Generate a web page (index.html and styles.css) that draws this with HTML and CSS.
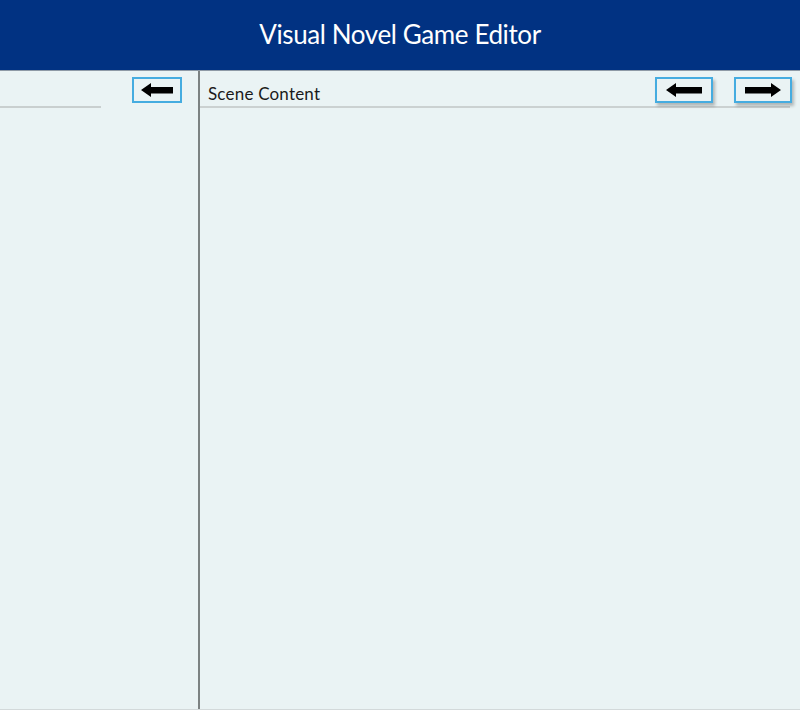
FILE: index.html
```html
<!DOCTYPE html>
<html lang="en">
<head>
<meta charset="utf-8">
<title>Visual Novel Game Editor</title>
<link rel="stylesheet" href="styles.css">
</head>
<body>
<header class="topbar">
  <h1 class="title">Visual Novel Game Editor</h1>
</header>
<main class="workspace">
  <section class="side">
    <div class="side-head">
      <div class="side-line"></div>
      <button class="arrow-btn small" type="button" aria-label="Back">
        <svg viewBox="0 0 32 14" width="32" height="14"><polygon points="0,7 10,0 10,4 32,4 32,10.5 10,10.5 10,14"/></svg>
      </button>
    </div>
  </section>
  <section class="content">
    <div class="content-head">
      <span class="content-title">Scene Content</span>
      <div class="nav">
        <button class="arrow-btn shadow" type="button" aria-label="Previous">
          <svg viewBox="0 0 36 14" width="36" height="14"><polygon points="0,7 10,0 10,4 36,4 36,10.5 10,10.5 10,14"/></svg>
        </button>
        <button class="arrow-btn shadow" type="button" aria-label="Next">
          <svg viewBox="0 0 36 14" width="36" height="14"><polygon points="36,7 26,0 26,4 0,4 0,10.5 26,10.5 26,14"/></svg>
        </button>
      </div>
    </div>
  </section>
</main>
</body>
</html>
```
FILE: styles.css
```css
* { box-sizing: border-box; }
html, body { margin: 0; padding: 0; }
body {
  width: 800px;
  height: 710px;
  background: #eaf3f4;
  font-family: "Lato", "Noto Sans", sans-serif;
  overflow: hidden;
}
.topbar {
  height: 71px;
  background: #013282;
  border-bottom: 1px solid #8e9aa6;
  display: flex;
  align-items: center;
  justify-content: center;
}
.title {
  margin: 0;
  color: #ffffff;
  font-weight: 400;
  font-size: 26px;
  letter-spacing: -0.4px;
  padding-bottom: 2px;
}
.workspace {
  display: flex;
  height: 639px;
  border-bottom: 1px solid #d3d9da;
}
.side {
  width: 200px;
  border-right: 2px solid #7c8282;
  flex: none;
}
.side-head {
  display: flex;
  align-items: flex-start;
  justify-content: space-between;
  padding: 6px 16px 0 0;
  height: 37px;
}
.side-line {
  width: 101px;
  height: 2px;
  background: #c9cfcf;
  margin-top: 29px;
}
.arrow-btn {
  display: flex;
  align-items: center;
  justify-content: center;
  margin: 0;
  padding: 0;
  height: 26px;
  background: #eaf3f4;
  border: 2px solid #45ace0;
  cursor: pointer;
}
.arrow-btn svg { fill: #000; display: block; }
.arrow-btn.small { width: 50px; }
.arrow-btn.shadow { width: 58px; box-shadow: 2px 3px 3px rgba(0,0,0,0.25); }
.content { flex: 1; }
.content-head {
  display: flex;
  align-items: flex-start;
  justify-content: space-between;
  height: 37px;
  margin-right: 10px;
  border-bottom: 2px solid #cbd1d1;
  padding-top: 6px;
}
.content-title {
  font-size: 17px;
  color: #1a1a1a;
  margin-left: 8px;
  margin-top: 6px;
  letter-spacing: 0.2px;
}
.nav {
  display: flex;
  gap: 21px;
  margin-right: -2px;
}
```
